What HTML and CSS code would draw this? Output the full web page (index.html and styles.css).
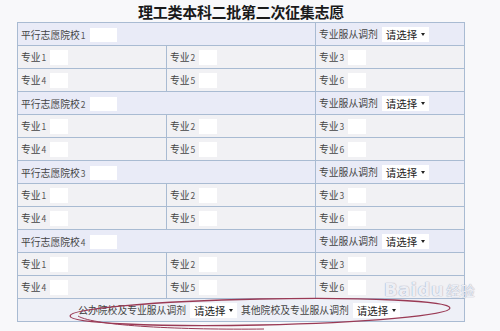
FILE: index.html
```html
<!DOCTYPE html>
<html lang="zh-CN">
<head>
<meta charset="utf-8">
<title>理工类本科二批第二次征集志愿</title>
<link rel="stylesheet" href="styles.css">
</head>
<body>
<div class="page">
  <h1 class="title">理工类本科二批第二次征集志愿</h1>
  <table class="form">
    <colgroup><col class="c"><col class="c"><col class="c"></colgroup>
    <tbody>
      <tr class="school"><td colspan="2"><span class="lb">平行志愿院校<i>1</i></span><span class="box wide"></span></td><td><span class="lb">专业服从调剂</span><span class="sel">请选择<b class="caret"></b></span></td></tr>
      <tr><td><span class="lb">专业<i>1</i></span><span class="box"></span></td><td><span class="lb">专业<i>2</i></span><span class="box"></span></td><td><span class="lb">专业<i>3</i></span><span class="box"></span></td></tr>
      <tr><td><span class="lb">专业<i>4</i></span><span class="box"></span></td><td><span class="lb">专业<i>5</i></span><span class="box"></span></td><td><span class="lb">专业<i>6</i></span><span class="box"></span></td></tr>

      <tr class="school"><td colspan="2"><span class="lb">平行志愿院校<i>2</i></span><span class="box wide"></span></td><td><span class="lb">专业服从调剂</span><span class="sel">请选择<b class="caret"></b></span></td></tr>
      <tr><td><span class="lb">专业<i>1</i></span><span class="box"></span></td><td><span class="lb">专业<i>2</i></span><span class="box"></span></td><td><span class="lb">专业<i>3</i></span><span class="box"></span></td></tr>
      <tr><td><span class="lb">专业<i>4</i></span><span class="box"></span></td><td><span class="lb">专业<i>5</i></span><span class="box"></span></td><td><span class="lb">专业<i>6</i></span><span class="box"></span></td></tr>

      <tr class="school"><td colspan="2"><span class="lb">平行志愿院校<i>3</i></span><span class="box wide"></span></td><td><span class="lb">专业服从调剂</span><span class="sel">请选择<b class="caret"></b></span></td></tr>
      <tr><td><span class="lb">专业<i>1</i></span><span class="box"></span></td><td><span class="lb">专业<i>2</i></span><span class="box"></span></td><td><span class="lb">专业<i>3</i></span><span class="box"></span></td></tr>
      <tr><td><span class="lb">专业<i>4</i></span><span class="box"></span></td><td><span class="lb">专业<i>5</i></span><span class="box"></span></td><td><span class="lb">专业<i>6</i></span><span class="box"></span></td></tr>

      <tr class="school"><td colspan="2"><span class="lb">平行志愿院校<i>4</i></span><span class="box wide"></span></td><td><span class="lb">专业服从调剂</span><span class="sel">请选择<b class="caret"></b></span></td></tr>
      <tr><td><span class="lb">专业<i>1</i></span><span class="box"></span></td><td><span class="lb">专业<i>2</i></span><span class="box"></span></td><td><span class="lb">专业<i>3</i></span><span class="box"></span></td></tr>
      <tr><td><span class="lb">专业<i>4</i></span><span class="box"></span></td><td><span class="lb">专业<i>5</i></span><span class="box"></span></td><td><span class="lb">专业<i>6</i></span><span class="box"></span></td></tr>

      <tr class="foot"><td colspan="3"><span class="lb">公办院校及专业服从调剂</span><span class="sel">请选择<b class="caret"></b></span><span class="lb">其他院校及专业服从调剂</span><span class="sel">请选择<b class="caret"></b></span></td></tr>
    </tbody>
  </table>
  <svg class="ring" width="400" height="40" viewBox="0 0 400 40" aria-hidden="true">
    <ellipse cx="196" cy="20" rx="190" ry="13" fill="none" stroke="#9a3a55" stroke-width="1.3" transform="rotate(-1.2 196 20)"/>
    <path d="M14 24 C 30 34, 120 38, 200 37" fill="none" stroke="#9a3a55" stroke-width="1"/>
  </svg>
  <div class="mark"><span class="bai">Bai</span><span class="du">du</span><span class="jy">经验</span></div>
</div>
</body>
</html>
```

FILE: styles.css
```css
html, body {
  margin: 0;
  padding: 0;
  background: #f8f8fa;
}

.page {
  position: relative;
  width: 500px;
  height: 331px;
  overflow: hidden;
  font-family: "Noto Sans CJK SC", "DejaVu Sans", sans-serif;
  color: #444;
}

.title {
  margin: 0 0 0 17px;
  width: 448px;
  height: 22px;
  padding-top: 3px;
  box-sizing: border-box;
  text-align: center;
  font-size: 15px;
  line-height: 17px;
  font-weight: bold;
  color: #1a1a1a;
  letter-spacing: -0.3px;
}

.form {
  margin-left: 17px;
  border-collapse: collapse;
  table-layout: fixed;
  width: 448px;
  font-size: 9.8px;
}

.form .c { width: 149px; }

.form td {
  border: 1px solid #a9bbd2;
  height: 23px;
  padding: 0 0 0 3px;
  box-sizing: border-box;
  background: #f1f1f4;
  white-space: nowrap;
  vertical-align: middle;
  line-height: 14px;
}

.form tr.school td { background: #e9ebf7; }

.form tr.foot td {
  background: #eef0f7;
  text-align: center;
  padding: 0;
}

.lb {
  display: inline-block;
  vertical-align: middle;
  margin-right: 4px;
}

.lb i {
  font-style: normal;
  font-size: 8.5px;
  margin-left: 1px;
  color: #555;
}

.box {
  display: inline-block;
  vertical-align: middle;
  width: 18px;
  height: 15px;
  background: #ffffff;
}

.box.wide { width: 27px; height: 14px; }

.sel {
  display: inline-block;
  vertical-align: middle;
  width: 47px;
  height: 15px;
  box-sizing: border-box;
  padding-left: 4px;
  background: #ffffff;
  color: #222;
  text-align: left;
  font-size: 10.5px;
  line-height: 15px;
  position: relative;
}

.foot .sel { margin-right: 4px; }

.caret {
  position: absolute;
  right: 4px;
  top: 6px;
  width: 0;
  height: 0;
  border-left: 2.5px solid transparent;
  border-right: 2.5px solid transparent;
  border-top: 3px solid #222;
}

.ring {
  position: absolute;
  left: 64px;
  top: 292px;
}

.mark {
  position: absolute;
  left: 384px;
  top: 281px;
  height: 18px;
  font-family: "DejaVu Sans", sans-serif;
  font-size: 18px;
  line-height: 18px;
  font-weight: bold;
  color: rgba(252, 252, 255, 0.85);
  text-shadow: 0 0 1px rgba(150, 160, 185, 0.9), 0 0 1px rgba(150, 160, 185, 0.6);
  letter-spacing: 0.5px;
  white-space: nowrap;
}

.mark .jy {
  font-family: "Noto Sans CJK SC", sans-serif;
  font-size: 14px;
  font-weight: normal;
  margin-left: 2px;
}
```
